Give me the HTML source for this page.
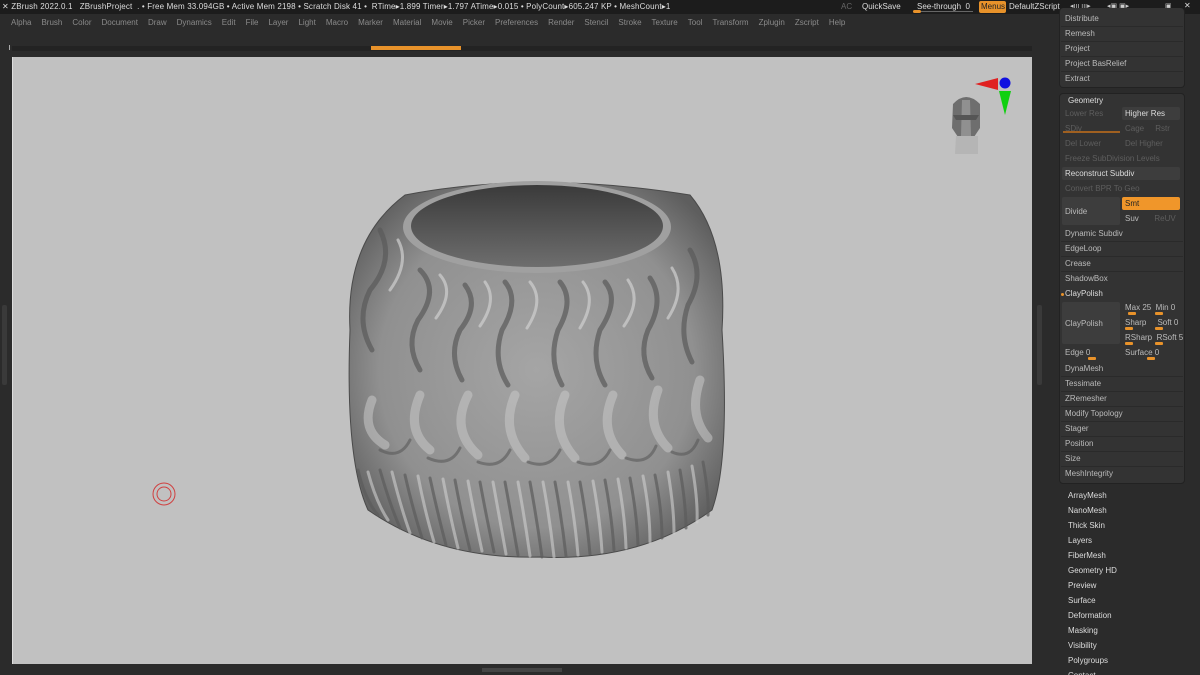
<!DOCTYPE html>
<html><head><meta charset="utf-8"><style>
*{margin:0;padding:0;box-sizing:border-box}
html,body{width:1200px;height:675px}
body{background:#2b2b2b;font-family:"Liberation Sans",sans-serif;font-size:8px;color:#c8c8c8;position:relative;overflow:hidden}
.a{position:absolute;white-space:nowrap}
.top{left:0;top:0;width:1200px;height:14px;background:#1c1c1c}
.menu span{margin-right:10px;color:#8a8a8a}
.pn{background:#333;border-radius:4px;border:1px solid #222}
.r{position:absolute;left:1065px;color:#bbb;font-size:8px;line-height:15px}
.dim{color:#5e5e5e}
.btn{position:absolute;background:#3d3d3d;border-radius:2px}
.sep{position:absolute;left:1061px;width:122px;height:1px;background:#2a2a2a}
.o{position:absolute;left:1068px;color:#ddd;font-size:8px;line-height:15px}
.sl{position:absolute;height:3px;width:8px;background:#e8922a;border-radius:1px}
</style></head><body>
<div class="a top"></div>
<div class="a" style="left:2px;top:2px;color:#ddd;letter-spacing:0.15px">✕ ZBrush 2022.0.1 &nbsp; ZBrushProject &nbsp;. • Free Mem 33.094GB • Active Mem 2198 • Scratch Disk 41 • &nbsp;RTime▸1.899 Timer▸1.797 ATime▸0.015 • PolyCount▸605.247 KP • MeshCount▸1</div>
<div class="a" style="left:841px;top:2px;color:#666">AC</div>
<div class="a" style="left:862px;top:2px;color:#ddd">QuickSave</div>
<div class="a" style="left:917px;top:2px;color:#ddd">See-through &nbsp;0</div>
<div class="a" style="left:913px;top:11px;width:60px;height:1px;background:#666"></div>
<div class="a" style="left:913px;top:10px;width:8px;height:3px;background:#e8922a;border-radius:2px"></div>
<div class="a" style="left:979px;top:1px;width:27px;height:12px;background:#e8922a;color:#222;padding-left:2px;line-height:12px;border-radius:2px">Menus</div>
<div class="a" style="left:1009px;top:2px;color:#ddd">DefaultZScript</div>
<div class="a" style="left:1070px;top:2px;color:#ccc;font-size:7px">◂ııı ııı▸</div>
<div class="a" style="left:1107px;top:2px;color:#ccc;font-size:7px">◂▣ ▣▸</div>
<div class="a" style="left:1148px;top:2px;color:#ccc;font-size:7px">▁</div>
<div class="a" style="left:1165px;top:2px;color:#ccc;font-size:7px">▣</div>
<div class="a" style="left:1184px;top:1px;color:#ddd;font-size:8px">✕</div>
<div class="a menu" style="left:11px;top:18px"><span>Alpha</span><span>Brush</span><span>Color</span><span>Document</span><span>Draw</span><span>Dynamics</span><span>Edit</span><span>File</span><span>Layer</span><span>Light</span><span>Macro</span><span>Marker</span><span>Material</span><span>Movie</span><span>Picker</span><span>Preferences</span><span>Render</span><span>Stencil</span><span>Stroke</span><span>Texture</span><span>Tool</span><span>Transform</span><span>Zplugin</span><span>Zscript</span><span>Help</span></div>
<div class="a" style="left:12px;top:46px;width:1020px;height:5px;background:#232323"></div>
<div class="a" style="left:371px;top:46px;width:90px;height:4px;background:#e8922a"></div>
<div class="a" style="left:9px;top:45px;width:1px;height:5px;background:#aaa"></div>
<div class="a" style="left:12px;top:57px;width:1020px;height:607px;background:#c1c1c1;border-left:1px solid #ddd"></div>
<div class="a" style="left:2px;top:305px;width:5px;height:80px;background:#3a3a3a;border-radius:2px"></div>
<div class="a" style="left:1037px;top:305px;width:5px;height:80px;background:#3a3a3a;border-radius:2px"></div>
<div class="a" style="left:482px;top:668px;width:80px;height:4px;background:#444"></div>
<svg class="a" style="left:0;top:0" width="1200" height="675">
<defs>
<radialGradient id="b" cx="0.5" cy="0.5" r="0.6"><stop offset="0" stop-color="#a5a5a5"/><stop offset="0.7" stop-color="#909090"/><stop offset="1" stop-color="#5e5e5e"/></radialGradient>
<linearGradient id="h" x1="0" y1="0" x2="0" y2="1"><stop offset="0" stop-color="#3a3a3a"/><stop offset="1" stop-color="#6e6e6e"/></linearGradient>
</defs>
<path d="M405,195 Q536,170 690,195 Q728,240 722,330 Q730,460 712,510 Q640,562 540,557 Q440,560 368,510 Q345,460 350,330 Q345,240 405,195 Z" fill="url(#b)" stroke="#4a4a4a" stroke-width="1"/>
<!-- top S ridges -->
<g fill="none" stroke-linecap="round">
<g stroke="#5a5a5a" stroke-width="5" opacity="0.7">
<path d="M380,230 Q395,260 370,290 Q355,320 372,350"/>
<path d="M420,270 Q440,290 418,320 Q405,345 420,370"/>
<path d="M465,285 Q480,305 460,330 Q448,355 462,380"/>
<path d="M505,282 Q520,300 502,330 Q492,360 508,385"/>
<path d="M560,282 Q575,300 558,330 Q548,360 562,385"/>
<path d="M605,282 Q620,300 600,330 Q590,360 605,385"/>
<path d="M650,278 Q665,300 648,330 Q638,355 652,378"/>
<path d="M690,250 Q705,275 688,305 Q678,335 692,362"/>
</g>
<g stroke="#d0d0d0" stroke-width="3" opacity="0.7">
<path d="M398,240 Q410,262 390,290"/>
<path d="M440,275 Q455,292 436,318"/>
<path d="M485,282 Q498,300 480,326"/>
<path d="M530,282 Q545,300 527,328"/>
<path d="M583,282 Q597,300 580,328"/>
<path d="M628,280 Q642,300 624,326"/>
<path d="M672,268 Q686,290 668,318"/>
</g>
<!-- middle crescents -->
<g stroke="#c8c8c8" stroke-width="9" opacity="0.55">
<path d="M372,400 Q360,430 385,445"/>
<path d="M420,395 Q405,430 430,450"/>
<path d="M468,395 Q450,430 478,455"/>
<path d="M515,395 Q500,430 525,458"/>
<path d="M565,395 Q550,430 575,458"/>
<path d="M613,395 Q598,430 622,455"/>
<path d="M658,390 Q645,425 668,448"/>
<path d="M700,380 Q688,415 708,438"/>
</g>
<g stroke="#5a5a5a" stroke-width="3" opacity="0.6">
<path d="M380,450 Q400,460 410,440"/><path d="M428,458 Q450,468 460,448"/><path d="M478,462 Q500,470 510,450"/><path d="M528,462 Q550,470 560,450"/><path d="M578,462 Q600,470 610,450"/><path d="M626,458 Q648,466 656,446"/><path d="M672,452 Q690,460 698,440"/>
</g>
<!-- bottom diagonal ridges -->
<g stroke="#5c5c5c" stroke-width="3" opacity="0.7">
<path d="M358,470 Q365,500 378,515"/><path d="M380,470 Q390,505 400,528"/><path d="M405,475 Q413,510 422,538"/><path d="M430,478 Q438,515 446,545"/><path d="M455,480 Q462,518 470,550"/><path d="M480,482 Q487,520 494,552"/><path d="M505,482 Q512,520 518,555"/><path d="M530,482 Q537,520 542,557"/><path d="M555,482 Q562,520 566,556"/><path d="M580,482 Q587,520 590,554"/><path d="M605,480 Q612,518 614,550"/><path d="M630,478 Q637,515 638,545"/><path d="M655,475 Q662,510 662,538"/><path d="M680,470 Q686,505 686,528"/><path d="M703,462 Q709,495 708,515"/>
</g>
<g stroke="#cfcfcf" stroke-width="3" opacity="0.6">
<path d="M368,472 Q376,502 388,520"/><path d="M392,472 Q401,508 410,533"/><path d="M418,476 Q425,512 434,542"/><path d="M443,479 Q450,516 458,548"/><path d="M468,481 Q475,519 482,551"/><path d="M493,482 Q500,520 506,554"/><path d="M518,482 Q525,520 530,556"/><path d="M543,482 Q550,520 554,557"/><path d="M568,482 Q575,520 578,555"/><path d="M593,481 Q600,519 602,552"/><path d="M618,479 Q625,516 626,548"/><path d="M643,476 Q650,512 650,542"/><path d="M668,472 Q674,508 674,533"/><path d="M692,466 Q698,500 697,522"/>
</g>
</g>
<ellipse cx="537" cy="227" rx="134" ry="46" fill="#a0a0a0"/>
<ellipse cx="537" cy="226" rx="126" ry="41" fill="url(#h)"/>
<circle cx="164" cy="494" r="11" fill="none" stroke="#d04040" stroke-width="1"/>
<circle cx="164" cy="494" r="7" fill="none" stroke="#d04040" stroke-width="1"/>
<polygon points="975,84 998,78 998,90" fill="#e02020"/>
<circle cx="1005" cy="83" r="5.5" fill="#1010e0"/>
<polygon points="999,91 1011,91 1005,115" fill="#10d010"/>
<path d="M953,104 Q966,90 980,104 L980,128 L972,140 L960,140 L952,128 Z" fill="#6e6e6e"/>
<path d="M962,100 L970,100 L971,136 L961,136 Z" fill="#909090"/>
<path d="M953,115 L979,115 L976,120 L956,120 Z" fill="#555"/>
<path d="M956,136 L978,136 L978,154 L955,154 Z" fill="#b5b5b5"/>
</svg>
<div class="a pn" style="left:1059px;top:8px;width:126px;height:80px;border-top:none"></div>
<div class="a pn" style="left:1059px;top:93px;width:126px;height:391px"></div>
<div class="r" style="top:11px">Distribute</div>
<div class="sep" style="top:26px"></div><div class="r" style="top:26px">Remesh</div>
<div class="sep" style="top:41px"></div><div class="r" style="top:41px">Project</div>
<div class="sep" style="top:56px"></div><div class="r" style="top:56px">Project BasRelief</div>
<div class="sep" style="top:71px"></div><div class="r" style="top:71px">Extract</div>
<div class="r" style="top:93px;left:1068px;color:#ddd">Geometry</div>
<div class="btn" style="left:1122px;top:107px;width:58px;height:13px"></div>
<div class="r dim" style="top:106px">Lower Res</div><div class="r" style="top:106px;left:1125px;color:#ddd">Higher Res</div>
<div class="r dim" style="top:121px">SDiv</div><div class="r dim" style="top:121px;left:1125px">Cage &nbsp; &nbsp; Rstr</div>
<div class="a" style="left:1063px;top:131px;width:57px;height:2px;background:#a06020"></div>
<div class="r dim" style="top:136px">Del Lower</div><div class="r dim" style="top:136px;left:1125px">Del Higher</div>
<div class="r dim" style="top:151px">Freeze SubDivision Levels</div>
<div class="btn" style="left:1062px;top:167px;width:118px;height:13px"></div>
<div class="r" style="top:166px;color:#ddd">Reconstruct Subdiv</div>
<div class="r dim" style="top:181px">Convert BPR To Geo</div>
<div class="btn" style="left:1062px;top:197px;width:58px;height:28px"></div>
<div class="r" style="top:204px">Divide</div>
<div class="a" style="left:1122px;top:197px;width:58px;height:13px;background:#f0962a;border-radius:2px"></div>
<div class="r" style="top:196px;left:1125px;color:#222">Smt</div>
<div class="r" style="top:211px;left:1125px">Suv &nbsp; &nbsp; &nbsp; <span class="dim">ReUV</span></div>
<div class="r" style="top:226px">Dynamic Subdiv</div>
<div class="sep" style="top:241px"></div><div class="r" style="top:241px">EdgeLoop</div>
<div class="sep" style="top:256px"></div><div class="r" style="top:256px">Crease</div>
<div class="sep" style="top:271px"></div><div class="r" style="top:271px">ShadowBox</div>
<div class="a" style="left:1061px;top:293px;width:3px;height:3px;background:#e8922a;border-radius:2px"></div>
<div class="r" style="top:286px;color:#ddd">ClayPolish</div>
<div class="btn" style="left:1062px;top:302px;width:58px;height:42px"></div>
<div class="r" style="top:316px">ClayPolish</div>
<div class="r" style="top:300px;left:1125px">Max 25 &nbsp;Min 0</div>
<div class="r" style="top:315px;left:1125px">Sharp &nbsp; &nbsp; Soft 0</div>
<div class="r" style="top:330px;left:1125px">RSharp &nbsp;RSoft 5</div>
<div class="sl" style="left:1128px;top:312px"></div><div class="sl" style="left:1155px;top:312px"></div>
<div class="sl" style="left:1125px;top:327px"></div><div class="sl" style="left:1155px;top:327px"></div>
<div class="sl" style="left:1125px;top:342px"></div><div class="sl" style="left:1155px;top:342px"></div>
<div class="r" style="top:345px">Edge 0</div><div class="r" style="top:345px;left:1125px">Surface 0</div>
<div class="sl" style="left:1088px;top:357px"></div><div class="sl" style="left:1147px;top:357px"></div>
<div class="r" style="top:361px">DynaMesh</div>
<div class="sep" style="top:376px"></div><div class="r" style="top:376px">Tessimate</div>
<div class="sep" style="top:391px"></div><div class="r" style="top:391px">ZRemesher</div>
<div class="sep" style="top:406px"></div><div class="r" style="top:406px">Modify Topology</div>
<div class="sep" style="top:421px"></div><div class="r" style="top:421px">Stager</div>
<div class="sep" style="top:436px"></div><div class="r" style="top:436px">Position</div>
<div class="sep" style="top:451px"></div><div class="r" style="top:451px">Size</div>
<div class="sep" style="top:466px"></div><div class="r" style="top:466px">MeshIntegrity</div>
<div class="o" style="top:488px">ArrayMesh</div>
<div class="o" style="top:503px">NanoMesh</div>
<div class="o" style="top:518px">Thick Skin</div>
<div class="o" style="top:533px">Layers</div>
<div class="o" style="top:548px">FiberMesh</div>
<div class="o" style="top:563px">Geometry HD</div>
<div class="o" style="top:578px">Preview</div>
<div class="o" style="top:593px">Surface</div>
<div class="o" style="top:608px">Deformation</div>
<div class="o" style="top:623px">Masking</div>
<div class="o" style="top:638px">Visibility</div>
<div class="o" style="top:653px">Polygroups</div>
<div class="o" style="top:668px;height:7px;overflow:hidden">Contact</div>
</body></html>
